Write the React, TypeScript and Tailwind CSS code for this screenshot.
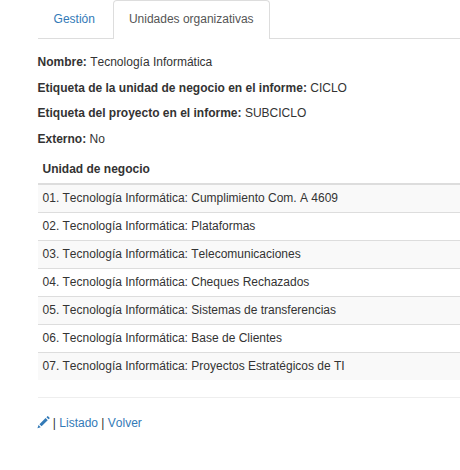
const units = [
  'Cumplimiento Com. A 4609',
  'Plataformas',
  'Telecomunicaciones',
  'Cheques Rechazados',
  'Sistemas de transferencias',
  'Base de Clientes',
  'Proyectos Estratégicos de TI',
];

const details = [
  ['Nombre', 'Tecnología Informática'],
  ['Etiqueta de la unidad de negocio en el informe', 'CICLO'],
  ['Etiqueta del proyecto en el informe', 'SUBCICLO'],
  ['Externo', 'No'],
];

export default function App() {
  return (
    <main className="h-[470px] w-[460px] overflow-hidden bg-white pl-[37.5px] font-['Liberation_Sans',Arial,sans-serif] text-[12px] leading-[17px] text-[#333] [font-kerning:none]">
      <nav className="flex h-[39px] border-b border-[#ddd]">
        <a className="mr-[2px] flex h-[39px] w-[73.5px] items-center justify-center text-[#337ab7]">Gestión</a>
        <a className="flex h-[39px] w-[157px] justify-center rounded-t-[4px] border border-b-0 border-[#ddd] bg-white pt-[10px] pr-[0.5px] text-[#555]">
          Unidades organizativas
        </a>
      </nav>
      <section className="flex flex-col gap-[8.5px] pt-[15px]">
        {details.map(([label, value]) => (
          <p key={label}>
            <b>{label}:</b> {value}
          </p>
        ))}
      </section>
      <section className="mt-[7.5px]">
        <h2 className="h-[30px] border-b-2 border-[#ddd] px-[5px] pt-[6px] font-bold">Unidad de negocio</h2>
        <ul>
          {units.map((unit, i) => (
            <li
              key={unit}
              className="h-[28px] border-t border-[#ddd] px-[5px] pt-[5px] first:h-[27px] first:border-t-0 odd:bg-[#f9f9f9]"
            >
              0{i + 1}. Tecnología Informática: {unit}
            </li>
          ))}
        </ul>
      </section>
      <hr className="mt-[17px] border-[#eee]" />
      <footer className="mt-[17px]">
        <svg className="inline-block size-[12px] overflow-visible fill-[#337ab7] align-[-2px]" viewBox="0 0 1200 1200">
          <path
            transform="matrix(1 0 0 -1 -40 1120)"
            d="M1011 1210q19 0 33 -13l153 -153q13 -14 13 -33t-13 -33l-99 -92l-214 214l95 96q13 14 32 14zM1013 800l-615 -614l-214 214l614 614zM317 96l-333 -112l110 335z"
          />
        </svg>{' '}
        | <a className="text-[#337ab7]">Listado</a> | <a className="text-[#337ab7]">Volver</a>
      </footer>
    </main>
  );
}
